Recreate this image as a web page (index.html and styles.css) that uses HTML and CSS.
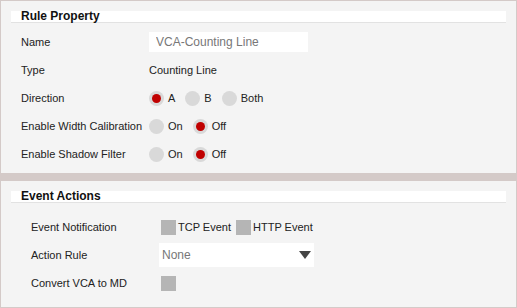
FILE: index.html
```html
<!DOCTYPE html>
<html lang="en">
<head>
    <meta charset="UTF-8">
    <title>Rule Property</title>
    <link rel="stylesheet" href="styles.css">
</head>
<body>
    <div class="frame">
        <section class="panel panel-rule">
            <div class="panel-title">Rule Property</div>
            <div class="rows">
                <div class="row">
                    <span class="label">Name</span>
                    <input class="text-input" type="text" value="VCA-Counting Line">
                </div>
                <div class="row">
                    <span class="label">Type</span>
                    <span class="value">Counting Line</span>
                </div>
                <div class="row">
                    <span class="label">Direction</span>
                    <span class="option"><span class="radio checked"></span>A</span>
                    <span class="option"><span class="radio"></span>B</span>
                    <span class="option"><span class="radio"></span>Both</span>
                </div>
                <div class="row">
                    <span class="label">Enable Width Calibration</span>
                    <span class="option"><span class="radio"></span>On</span>
                    <span class="option"><span class="radio checked"></span>Off</span>
                </div>
                <div class="row">
                    <span class="label">Enable Shadow Filter</span>
                    <span class="option"><span class="radio"></span>On</span>
                    <span class="option"><span class="radio checked"></span>Off</span>
                </div>
            </div>
        </section>
        <div class="divider"></div>
        <section class="panel panel-events">
            <div class="panel-title">Event Actions</div>
            <div class="rows">
                <div class="row">
                    <span class="label">Event Notification</span>
                    <span class="check-option"><span class="checkbox"></span>TCP Event</span>
                    <span class="check-option"><span class="checkbox"></span>HTTP Event</span>
                </div>
                <div class="row">
                    <span class="label">Action Rule</span>
                    <div class="select">None<span class="arrow"></span></div>
                </div>
                <div class="row">
                    <span class="label">Convert VCA to MD</span>
                    <span class="checkbox"></span>
                </div>
            </div>
        </section>
    </div>
</body>
</html>
```

FILE: styles.css
```css
/* Reset */
* {
    margin: 0;
    padding: 0;
    box-sizing: border-box;
}

body {
    font-family: 'Liberation Sans', Arial, sans-serif;
    font-size: 11px;
    color: #222;
    background-color: #f4f4f4;
}

.frame {
    width: 517px;
    height: 308px;
    border: 1px solid #d4cac8;
    background-color: #f4f4f4;
}

.panel {
    padding-top: 10px;
}

.panel-rule {
    height: 172px;
}

.panel-events {
    height: 125px;
}

.divider {
    height: 8px;
    background-color: #d4cac8;
}

.panel-title {
    margin: 0 10px;
    height: 12px;
    padding-left: 10px;
    background-color: #fff;
    border-bottom: 1px solid #e2e2e2;
    font-size: 12px;
    font-weight: bold;
    line-height: 11px;
    color: #111;
}

.rows {
    margin-top: 5px;
}

.panel-events .rows {
    margin-top: 10px;
}

.row {
    display: flex;
    align-items: center;
    height: 28px;
    padding-left: 20px;
}

.panel-events .row {
    padding-left: 30px;
}

.label {
    width: 128px;
    flex-shrink: 0;
}

.panel-events .label {
    width: 130px;
}

.text-input {
    width: 159px;
    height: 20px;
    padding-left: 7px;
    border: none;
    background-color: #fff;
    font-family: 'Liberation Sans', Arial, sans-serif;
    font-size: 12px;
    color: #777;
}

.option {
    display: flex;
    align-items: center;
    margin-right: 10px;
}

.radio {
    width: 15px;
    height: 15px;
    border-radius: 50%;
    background-color: #d9d9d9;
    margin-right: 4px;
    display: flex;
    align-items: center;
    justify-content: center;
}

.radio.checked::after {
    content: "";
    width: 9px;
    height: 9px;
    border-radius: 50%;
    background-color: #c00000;
}

.check-option {
    display: flex;
    align-items: center;
    margin-right: 5px;
}

.checkbox {
    width: 15px;
    height: 15px;
    background-color: #b5b5b5;
    margin-right: 2px;
}

.select {
    position: relative;
    width: 155px;
    height: 24px;
    margin-left: -2px;
    padding-left: 3px;
    line-height: 24px;
    background-color: #fff;
    font-size: 12px;
    color: #777;
}

.arrow {
    position: absolute;
    right: 3px;
    top: 8px;
    width: 0;
    height: 0;
    border-left: 6px solid transparent;
    border-right: 6px solid transparent;
    border-top: 8px solid #444;
}
```
